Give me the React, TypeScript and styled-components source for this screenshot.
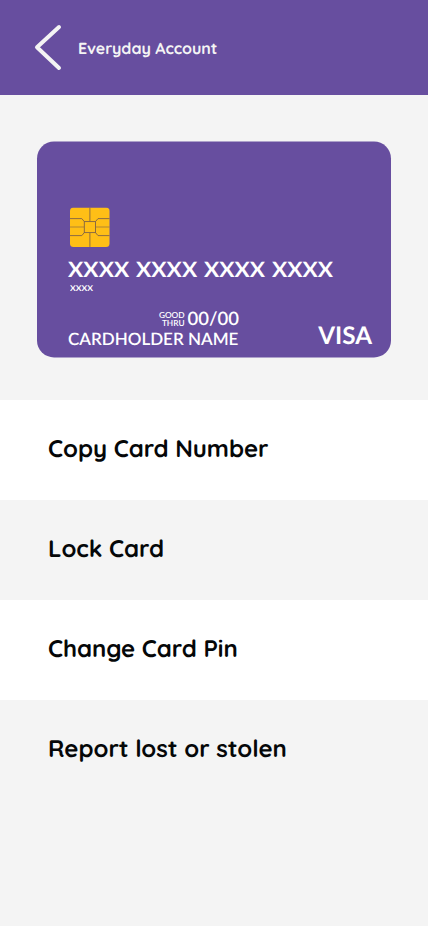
import React from "react";
import styled, { createGlobalStyle } from "styled-components";

const GlobalStyle = createGlobalStyle`
  * { box-sizing: border-box; }
  body { margin: 0; background: #f4f4f4; }
`;

const Screen = styled.main`
  display: flex;
  flex-direction: column;
  width: 428px;
  min-height: 926px;
  background: #f4f4f4;
  font-family: Quicksand, Lato, sans-serif;
  text-rendering: geometricPrecision;
`;

const Header = styled.header`
  display: flex;
  align-items: center;
  height: 95px;
  padding-left: 34px;
  background: #674e9f;
`;

const BackButton = styled.button`
  display: flex;
  padding: 0;
  border: 0;
  background: none;
`;

const Title = styled.h1`
  margin: 1px 0 0 16px;
  color: #f4f4f4;
  font-size: 16px;
  line-height: 20px;
  font-weight: 700;
  letter-spacing: -0.03px;
  white-space: nowrap;
`;

const Card = styled.section`
  display: flex;
  flex-direction: column;
  width: 354px;
  height: 216px;
  margin: 46px 0 43px 37px;
  padding: 66px 19px 0 31px;
  border-radius: 17px;
  background: #674e9f;
  color: #fff;
  font-family: Lato, sans-serif;
  transform: translateY(0.4px);
`;

const Chip = styled.svg`
  display: block;
  flex: none;
  margin-left: 1.6px;
`;

const CardNumber = styled.div`
  width: max-content;
  margin-top: 9px;
  font-size: 21px;
  line-height: 26px;
  font-weight: 700;
  letter-spacing: 0.1px;
  word-spacing: 1px;
  white-space: nowrap;
  transform: translateY(0.5px) scaleX(1.08);
  transform-origin: left;
`;

const ShortNumber = styled.div`
  width: max-content;
  margin: 1px 0 0 2px;
  font-size: 7.9px;
  line-height: 10px;
  font-weight: 700;
  transform: scaleX(1.08);
  transform-origin: left;
`;

const CardFooter = styled.div`
  display: flex;
  align-items: flex-end;
  justify-content: space-between;
  margin-top: 14px;
`;

const Holder = styled.div`
  display: flex;
  flex-direction: column;
  width: 171px;
`;

const Expiry = styled.div`
  display: flex;
  align-items: center;
  justify-content: flex-end;
  gap: 3px;
  height: 22px;
`;

const ExpiryLabel = styled.div`
  display: flex;
  flex-direction: column;
  margin-top: 1px;
  font-size: 8.3px;
  line-height: 8px;
  font-weight: 600;
  text-align: right;
`;

const ExpiryDate = styled.div`
  font-size: 18.5px;
  line-height: 22px;
  font-weight: 600;
`;

const HolderName = styled.div`
  font-size: 17px;
  line-height: 20px;
  font-weight: 600;
  white-space: nowrap;
`;

const Brand = styled.div`
  font-size: 24.2px;
  line-height: 26px;
  font-weight: 700;
`;

const Menu = styled.nav`
  display: flex;
  flex-direction: column;
`;

const MenuItem = styled.button<{ $light: boolean }>`
  height: 100px;
  padding: 0 0 4px 48px;
  border: 0;
  background: ${({ $light }) => ($light ? "#fff" : "#f4f4f4")};
  color: #050708;
  font-family: inherit;
  font-size: 24px;
  font-weight: 700;
  letter-spacing: -0.05px;
  text-align: left;
  text-rendering: inherit;
`;

const actions = [
  "Copy Card Number",
  "Lock Card",
  "Change Card Pin",
  "Report lost or stolen",
];

export default function App() {
  return (
    <Screen>
      <GlobalStyle />
      <Header>
        <BackButton aria-label="Back">
          <svg width="28" height="47" viewBox="0 0 28 47" fill="none" stroke="#f4f4f4" strokeWidth="4" strokeLinecap="round" strokeLinejoin="round">
            <path d="M25 3 3 23.2 25 44" />
          </svg>
        </BackButton>
        <Title>Everyday Account</Title>
      </Header>
      <Card>
        <Chip width="40" height="40" viewBox="0 0 40 40">
          <rect width="39.5" height="39.5" rx="3.5" fill="#ffbf16" />
          <g fill="none" stroke="#806346" strokeWidth="0.9">
            <path d="M19.9 0v14M19.9 25.5v14M0 11.2h11.8l2.5 3M0 28.2h11.8l2.5-3M39.5 11.2H28l-2.5 3M39.5 28.2H28l-2.5-3" />
            <path d="M0 19.6h14M25.5 19.6h14" strokeWidth="1.2" opacity="0.6" />
            <rect x="14.3" y="14.2" width="11.2" height="11" />
          </g>
        </Chip>
        <CardNumber>XXXX XXXX XXXX XXXX</CardNumber>
        <ShortNumber>XXXX</ShortNumber>
        <CardFooter>
          <Holder>
            <Expiry>
              <ExpiryLabel>
                <span>GOOD</span>
                <span>THRU</span>
              </ExpiryLabel>
              <ExpiryDate>00/00</ExpiryDate>
            </Expiry>
            <HolderName>CARDHOLDER NAME</HolderName>
          </Holder>
          <Brand>VISA</Brand>
        </CardFooter>
      </Card>
      <Menu>
        {actions.map((label, index) => (
          <MenuItem key={label} $light={index % 2 === 0}>
            {label}
          </MenuItem>
        ))}
      </Menu>
    </Screen>
  );
}
